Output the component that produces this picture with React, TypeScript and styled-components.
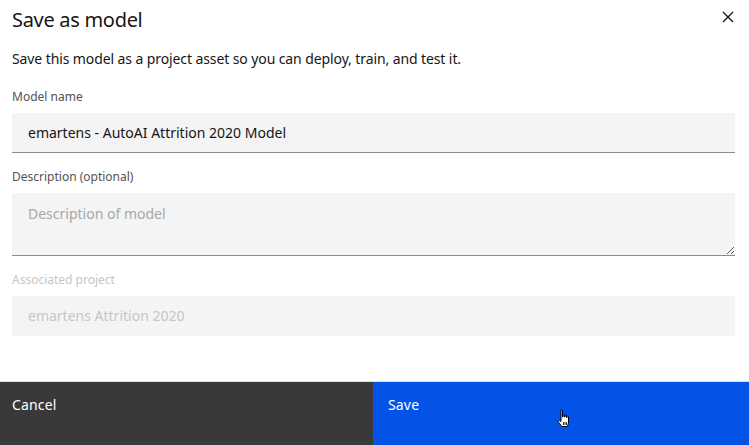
import React from "react";
import styled, { createGlobalStyle } from "styled-components";

const Global = createGlobalStyle`
  html, body { margin: 0; padding: 0; background: #ffffff; }
  body { font-family: "Noto Sans", "Open Sans", Arial, sans-serif; -webkit-font-smoothing: antialiased; }
  * { box-sizing: border-box; }
`;

const Modal = styled.div`
  position: relative;
  width: 749px;
  height: 445px;
  background: #ffffff;
  display: flex;
  flex-direction: column;
  overflow: hidden;
`;

const Body = styled.div`
  flex: 1;
  display: flex;
  flex-direction: column;
  padding: 6px 14px 0 12px;
`;

const Header = styled.div`
  display: flex;
  justify-content: space-between;
  align-items: flex-start;
`;

const Title = styled.h2`
  margin: 0;
  font-size: 20px;
  line-height: 28px;
  font-weight: 400;
  color: #161616;
  letter-spacing: -0.3px;
`;

const CloseButton = styled.button`
  border: none;
  background: transparent;
  padding: 0;
  margin: 3px -1px 0 0;
  width: 16px;
  height: 16px;
  display: flex;
  align-items: center;
  justify-content: center;
  cursor: pointer;
`;

const Intro = styled.p`
  margin: 15px 0 0;
  font-size: 14px;
  line-height: 20px;
  color: #161616;
  letter-spacing: -0.1px;
`;

const Field = styled.div<{ $top: number }>`
  display: flex;
  flex-direction: column;
  gap: 8px;
  margin-top: ${(p) => p.$top}px;
`;

const Label = styled.label<{ $disabled?: boolean }>`
  font-size: 12px;
  line-height: 16px;
  letter-spacing: 0;
  color: ${(p) => (p.$disabled ? "#c6c6c6" : "#525252")};
`;

const Input = styled.input<{ $disabled?: boolean }>`
  width: 100%;
  height: 40px;
  border: none;
  border-bottom: 1px solid ${(p) => (p.$disabled ? "transparent" : "#8d8d8d")};
  background: #f4f4f4;
  padding: 0 16px 0 16px;
  font-family: inherit;
  font-size: 14px;
  color: #161616;
  outline: none;
  &::placeholder { color: #a8a8a8; }
  &:disabled { color: #c6c6c6; -webkit-text-fill-color: #c6c6c6; opacity: 1; }
`;

const TextArea = styled.textarea`
  width: 100%;
  height: 63px;
  border: none;
  border-bottom: 1px solid #8d8d8d;
  background: #f4f4f4;
  padding: 11px 16px;
  font-family: inherit;
  font-size: 14px;
  line-height: 20px;
  color: #161616;
  resize: vertical;
  outline: none;
  display: block;
  &::placeholder { color: #a8a8a8; }
`;

const Footer = styled.div`
  display: flex;
  height: 64px;
  border-top: 1px solid #e0e0e0;
`;

const FooterButton = styled.button<{ $primary?: boolean }>`
  flex: 1;
  border: none;
  margin: 0;
  text-align: left;
  display: flex;
  align-items: flex-start;
  padding: 13px 15px 0 ${(p) => (p.$primary ? 15 : 12)}px;
  font-family: inherit;
  font-size: 14px;
  line-height: 20px;
  letter-spacing: 0.16px;
  color: #ffffff;
  background: ${(p) => (p.$primary ? "#0353e9" : "#393939")};
  cursor: pointer;
`;

const Cursor = styled.svg`
  position: absolute;
  left: 556px;
  top: 409px;
  pointer-events: none;
`;

export default function App() {
  return (
    <>
      <Global />
      <Modal>
        <Body>
          <Header>
            <Title>Save as model</Title>
            <CloseButton aria-label="Close">
              <svg width="12" height="12" viewBox="0 0 12 12">
                <path d="M1 1 L11 11 M11 1 L1 11" stroke="#161616" strokeWidth="1.4" fill="none" />
              </svg>
            </CloseButton>
          </Header>
          <Intro>Save this model as a project asset so you can deploy, train, and test it.</Intro>
          <Field $top={20}>
            <Label>Model name</Label>
            <Input defaultValue="emartens - AutoAI Attrition 2020 Model" />
          </Field>
          <Field $top={16}>
            <Label>Description (optional)</Label>
            <TextArea placeholder="Description of model" />
          </Field>
          <Field $top={16}>
            <Label $disabled>Associated project</Label>
            <Input $disabled disabled defaultValue="emartens Attrition 2020" />
          </Field>
        </Body>
        <Footer>
          <FooterButton>Cancel</FooterButton>
          <FooterButton $primary>Save</FooterButton>
        </Footer>
        <Cursor width="17" height="20" viewBox="0 0 17 20">
          <path
            d="M5 1.5 C5 0.7 6.5 0.7 6.5 1.5 L6.5 8 L7 8 L7 6.5 C7 5.7 8.5 5.7 8.5 6.5 L8.5 8 L9 8 L9 7 C9 6.2 10.5 6.2 10.5 7 L10.5 8.5 L11 8.5 L11 7.8 C11 7 12.5 7 12.5 7.8 L12.5 13 C12.5 15 11.5 16.5 11 17.5 L5.5 17.5 C5 16 3.5 14.5 2.5 13 C2 12 2.5 11 3.5 11.5 L5 12.5 Z"
            fill="#ffffff"
            stroke="#000000"
            strokeWidth="1"
          />
          <path d="M7.5 13 L7.5 16 M9 13 L9 16 M10.5 13 L10.5 16" stroke="#000" strokeWidth="0.8" />
        </Cursor>
      </Modal>
    </>
  );
}
